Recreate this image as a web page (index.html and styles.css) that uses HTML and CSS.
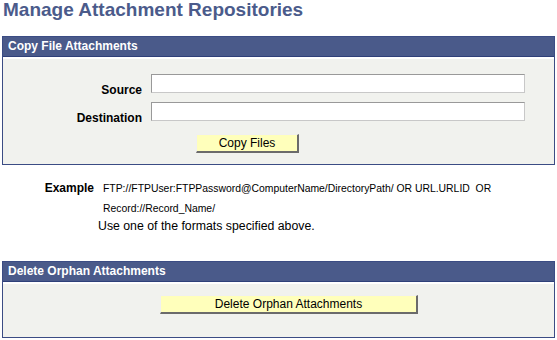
FILE: index.html
```
<html><head><meta http-equiv="Content-Type" content="text/html; charset=UTF-8">
    <link rel="stylesheet" href="styles.css">
    <title>Manage Attachment Repositories</title>
</head>

<body>
    <h1 class="page-title">Manage Attachment Repositories</h1>

    <div class="group">
        <div class="group-head">Copy File Attachments</div>
        <div class="group-body">
            <div class="form-grid">
                <label class="field-label" for="src">Source</label>
                <input class="field-input" id="src" type="text">
                <label class="field-label" for="dst">Destination</label>
                <input class="field-input" id="dst" type="text">
                <span></span>
                <div><button class="ps-button copy-btn">Copy Files</button></div>
            </div>
        </div>
    </div>

    <div class="example">
        <div class="example-label">Example</div>
        <div class="example-text">FTP://FTPUser:FTPPassword@ComputerName/DirectoryPath/ OR URL.URLID&nbsp; OR<br>Record://Record_Name/</div>
    </div>
    <p class="example-note">Use one of the formats specified above.</p>

    <div class="group group-delete">
        <div class="group-head">Delete Orphan Attachments</div>
        <div class="group-body delete-body">
            <button class="ps-button delete-btn">Delete Orphan Attachments</button>
        </div>
    </div>
</body></html>
```

FILE: styles.css
```
body {
    margin: 0;
    background: #ffffff;
    font-family: "Liberation Sans", Arial, sans-serif;
    color: #000000;
}

.page-title {
    margin: 0;
    padding: 0 3px;
    height: 36px;
    font-size: 19px;
    line-height: 20px;
    font-weight: bold;
    color: #4b5b8b;
}

.group {
    margin: 0 2px;
    border: 1px solid #3b4c84;
    background: #ffffff;
}

.group-head {
    height: 19px;
    line-height: 19px;
    padding-left: 5px;
    background: #4a5a8a;
    border-bottom: 1px solid #2f4079;
    color: #ffffff;
    font-size: 12px;
    font-weight: bold;
}

.group-body {
    margin-top: 2px;
    background: #f1f2ee;
    padding: 15px 0 11px;
}

.form-grid {
    display: grid;
    grid-template-columns: 139px 374px;
    column-gap: 9px;
    row-gap: 5px;
}

.form-grid > div {
    margin-top: 4px;
}

.field-label {
    align-self: start;
    padding-top: 9px;
    line-height: 14px;
    text-align: right;
    font-size: 12px;
    font-weight: bold;
}

.field-input {
    box-sizing: border-box;
    width: 374px;
    height: 19px;
    margin: 0;
    padding: 0 2px;
    background: #ffffff;
    border: 1px solid #c8c8c8;
    border-top-color: #999999;
    border-left-color: #999999;
    font-family: "Liberation Sans", Arial, sans-serif;
    font-size: 11px;
    outline: none;
}

.ps-button {
    box-sizing: border-box;
    height: 19px;
    padding: 0;
    background: #ffffbb;
    border: 1px solid #f0f0f0;
    border-right: 2px solid #6b6b6b;
    border-bottom: 2px solid #6b6b6b;
    font-family: "Liberation Sans", Arial, sans-serif;
    font-size: 12px;
    color: #000000;
    cursor: pointer;
}

.copy-btn {
    width: 103px;
    margin-left: 45px;
}

.example {
    display: grid;
    grid-template-columns: 94px auto;
    column-gap: 9px;
    margin-top: 13px;
}

.example-label {
    text-align: right;
    font-size: 12px;
    font-weight: bold;
    line-height: 20px;
}

.example-text {
    font-size: 10.4px;
    line-height: 20px;
    padding-top: 1px;
}

.example-note {
    margin: -2px 0 0 98px;
    font-size: 12.3px;
    line-height: 18px;
}

.group-delete {
    margin-top: 26px;
}

.delete-body {
    padding: 11px 0 23px 157px;
}

.delete-btn {
    width: 258px;
}
```
